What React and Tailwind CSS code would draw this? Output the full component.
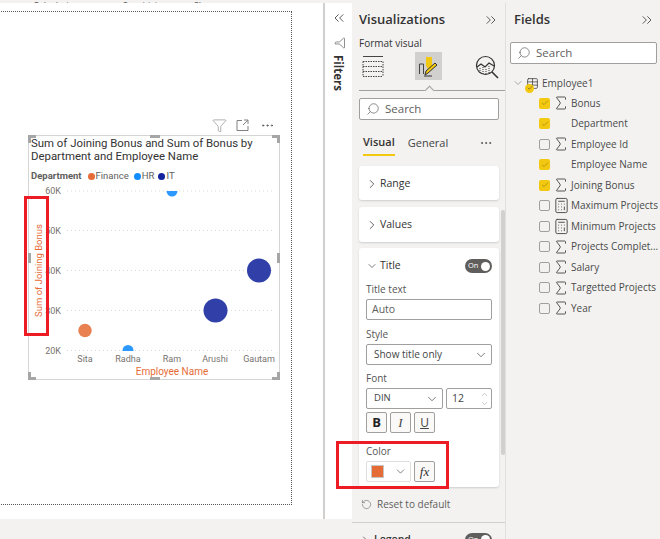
import {
  ChevronDown,
  ChevronRight,
  ChevronUp,
  ChevronsLeft,
  ChevronsRight,
  Calculator,
  Check,
  Ellipsis,
  Funnel,
  RotateCcw,
  Search,
  Sigma,
  Table,
} from "lucide-react";

const ui = "font-['Open_Sans','Noto_Sans',sans-serif]";
const din = "font-['Roboto','Liberation_Sans',sans-serif]";

const fields = [
  { name: "Bonus", on: true, icon: "sum" },
  { name: "Department", on: true },
  { name: "Employee Id", icon: "sum" },
  { name: "Employee Name", on: true },
  { name: "Joining Bonus", on: true, icon: "sum" },
  { name: "Maximum Projects", icon: "calc" },
  { name: "Minimum Projects", icon: "calc" },
  { name: "Projects Complet...", icon: "sum" },
  { name: "Salary", icon: "sum" },
  { name: "Targetted Projects", icon: "sum" },
  { name: "Year", icon: "sum" },
];

const yTicks = [
  { label: "60K", y: 55.5 },
  { label: "50K", y: 95 },
  { label: "40K", y: 135 },
  { label: "30K", y: 175 },
  { label: "20K", y: 215 },
];

const names = [
  { label: "Sita", x: 56 },
  { label: "Radha", x: 99 },
  { label: "Ram", x: 143 },
  { label: "Arushi", x: 186 },
  { label: "Gautam", x: 230 },
];

function Handles() {
  const corner = "absolute w-[8px] h-[8px] border-[#a6a6a6]";
  const side = "absolute bg-[#a6a6a6]";
  return (
    <>
      <div className={`${corner} -left-[1px] -top-[1px] border-l-[3px] border-t-[3px]`} />
      <div className={`${corner} -right-[1px] -top-[1px] border-r-[3px] border-t-[3px]`} />
      <div className={`${corner} -left-[1px] -bottom-[1px] border-l-[3px] border-b-[3px]`} />
      <div className={`${corner} -right-[1px] -bottom-[1px] border-r-[3px] border-b-[3px]`} />
      <div className={`${side} left-[121px] -top-[1px] w-[10px] h-[3px]`} />
      <div className={`${side} left-[121px] -bottom-[1px] w-[10px] h-[3px]`} />
      <div className={`${side} -left-[1px] top-[117px] w-[3px] h-[10px]`} />
      <div className={`${side} -right-[1px] top-[117px] w-[3px] h-[10px]`} />
    </>
  );
}

function Chart() {
  return (
    <div className="absolute left-[28px] top-[132px] w-[252px] h-[245px] border border-[#d5d5d5] bg-white">
      <Handles />
      <div className="absolute right-[4px] -top-[18px] flex items-center text-[#808080]">
        <Funnel size={15} strokeWidth={1} className="mr-[9px]" />
        <svg width="13" height="13" viewBox="0 0 13 13" fill="none" stroke="currentColor" className="mr-[11px]">
          <path d="M6 1.5H1v10h11V7M8 1h4v4M12 1L7 6" />
        </svg>
        <Ellipsis size={15} strokeWidth={1.5} className="text-[#555555]" />
      </div>
      <div className={`${din} pl-[2px] pt-[1px] text-[11.4px] leading-[13px] text-[#333333]`}>
        <div>Sum of Joining Bonus and Sum of Bonus by</div>
        <div>Department and Employee Name</div>
      </div>
      <div className={`${din} flex items-center pl-[2px] mt-[7px] text-[9.5px] leading-[12px] text-[#605e5c]`}>
        <span className="font-bold mr-[6px]">Department</span>
        <span className="w-[7px] h-[7px] rounded-full bg-[#e66c37] mr-[1px]" />
        <span className="mr-[5px]">Finance</span>
        <span className="w-[7px] h-[7px] rounded-full bg-[#118dff] mr-[1px]" />
        <span className="mr-[4px]">HR</span>
        <span className="w-[7px] h-[7px] rounded-full bg-[#12239e] mr-[1px]" />
        <span>IT</span>
      </div>
      <svg width="250" height="199" viewBox="0 44.5 250 199" className="mt-[-2px] block">
        <defs>
          <clipPath id="plot">
            <rect x="30" y="55.5" width="220" height="160" />
          </clipPath>
        </defs>
        {yTicks.map((t) => (
          <g key={t.label}>
            <line x1="38" x2="245" y1={t.y} y2={t.y} stroke="#d9d9d9" strokeDasharray="1 3" />
            <text x="32" y={t.y + 3} textAnchor="end" fontSize="9" fontFamily="Roboto" fill="#77736f">
              {t.label}
            </text>
          </g>
        ))}
        {names.map((n) => (
          <text key={n.label} x={n.x} y="226" textAnchor="middle" fontSize="9" fontFamily="Roboto" fill="#77736f">
            {n.label}
          </text>
        ))}
        <g clipPath="url(#plot)">
          <circle cx="56" cy="195" r="6.7" fill="#e8804f" />
          <circle cx="99" cy="215" r="5.5" fill="#2b99ff" />
          <circle cx="143" cy="55.5" r="5.5" fill="#2b99ff" />
          <circle cx="186.5" cy="175" r="12" fill="#3140a8" />
          <circle cx="230" cy="135" r="12" fill="#3140a8" />
        </g>
        <text x="143" y="239" textAnchor="middle" fontSize="10" fontFamily="Roboto" fill="#e66c37">
          Employee Name
        </text>
        <text
          transform="translate(12.5 135) rotate(-90)"
          textAnchor="middle"
          fontSize="9.5"
          fontFamily="Roboto"
          fill="#e66c37"
        >
          Sum of Joining Bonus
        </text>
      </svg>
    </div>
  );
}

function FormatIcons() {
  return (
    <div className="relative h-[37px] flex items-start mt-[2px]">
      <svg width="22" height="23" viewBox="0 0 22 23" className="ml-[3px] mt-[3px]" fill="none" stroke="#444444">
        <path d="M1 1.5h20" />
        <path d="M1 6.5h20M1 11.5h20M1 16.5h20M1 21.5h20M1 6.5v15M21 6.5v15" strokeDasharray="1.5 1" />
      </svg>
      <div className="ml-[31px] w-[27px] h-[28px] bg-[#d2d0ce] flex items-center justify-center">
        <svg width="22" height="22" viewBox="0 0 22 22" fill="none">
          <path d="M1.5 19V9h4v10" stroke="#444444" />
          <path d="M8 2h6v9l-3 4-3-4z" fill="#f2c811" />
          <path d="M7 20l1-4L17 8l2 2-9 8z" fill="#f2c811" stroke="#333333" />
          <path d="M6 21h8" stroke="#333333" />
        </svg>
      </div>
      <svg width="24" height="24" viewBox="0 0 24 24" className="ml-[33px] mt-[3px]" fill="none" stroke="#333333">
        <circle cx="10.5" cy="10.5" r="9" strokeWidth="1.2" />
        <path d="M2 12l4-3 4 3 4-4 5 3" strokeWidth="1.2" />
        <path d="M5 13v5M8 12v7M11 14v5M14 11v7" strokeDasharray="1 1" />
        <path d="M17 17l6 6" strokeWidth="1.6" />
      </svg>
      <div className="absolute left-0 right-0 top-[38px] h-px bg-[#a19f9d]" />
      <div className="absolute left-[67px] top-[35px] w-[7px] h-[7px] rotate-45 bg-[#f3f2f1] border-l border-t border-[#a19f9d]" />
    </div>
  );
}

function CollapsedCard({ label, className }) {
  return (
    <div className={`flex items-center w-[140px] bg-white rounded-[3px] shadow-[0_1px_2px_rgba(0,0,0,0.15)] pl-[6px] pt-[1px] ${className}`}>
      <ChevronRight size={14} strokeWidth={1.3} className="text-[#333333] mr-[1px]" />
      <span className="text-[10.5px] font-medium text-[#333333]">{label}</span>
    </div>
  );
}

function Select({ label, className }) {
  return (
    <div className={`flex items-center justify-between h-[21px] border border-[#a19f9d] rounded-[2px] bg-white pl-[7px] pr-[3px] text-[#444444] ${className}`}>
      <span>{label}</span>
      <ChevronDown size={14} strokeWidth={1.2} />
    </div>
  );
}

function TitleCard() {
  const label = "text-[10px] leading-[13px] text-[#555555]";
  const toggleBtn = "flex items-center justify-center w-[21px] h-[21px] border border-[#a19f9d] rounded-[2px] bg-[#faf9f8]";
  return (
    <div className="w-[140px] h-[239px] mt-[6px] bg-white rounded-[3px] shadow-[0_1px_2px_rgba(0,0,0,0.15)] px-[7px] pt-[11px]">
      <div className="flex items-center justify-between h-[14px]">
        <div className="flex items-center">
          <ChevronDown size={12} strokeWidth={1.3} className="text-[#333333] mr-[2px]" />
          <span className="text-[10.5px] font-medium text-[#333333]">Title</span>
        </div>
        <div className="flex items-center justify-between w-[27px] h-[14px] rounded-full bg-[#605e5c] pl-[3px] pr-[2px]">
          <span className="text-[7.5px] text-white">On</span>
          <span className="w-[9px] h-[9px] rounded-full bg-white" />
        </div>
      </div>
      <div className={`${label} mt-[10px]`}>Title text</div>
      <div className="flex items-center h-[21px] mt-[3px] border border-[#a19f9d] rounded-[2px] pl-[5px] text-[10.5px] text-[#605e5c]">Auto</div>
      <div className={`${label} mt-[8px]`}>Style</div>
      <Select label="Show title only" className="mt-[3px] text-[10px]" />
      <div className={`${label} mt-[7px]`}>Font</div>
      <div className="flex gap-[3px] mt-[3px]">
        <Select label="DIN" className="w-[77px] text-[9.5px]" />
        <div className="flex items-center justify-between flex-1 h-[21px] border border-[#a19f9d] rounded-[2px] pl-[5px] pr-[2px] text-[10.5px] text-[#444444]">
          <span>12</span>
          <div className="flex flex-col text-[#8a8886]">
            <ChevronUp size={9} strokeWidth={1.2} />
            <ChevronDown size={9} strokeWidth={1.2} />
          </div>
        </div>
      </div>
      <div className="flex gap-[3px] mt-[3px]">
        <div className={`${toggleBtn} text-[13px] font-bold text-[#222222]`}>B</div>
        <div className={`${toggleBtn} text-[13px] italic text-[#444444] font-['Liberation_Serif',serif]`}>I</div>
        <div className={`${toggleBtn} text-[12px] underline text-[#444444]`}>U</div>
      </div>
      <div className={`${label} mt-[12px]`}>Color</div>
      <div className="flex gap-[3px] mt-[3px]">
        <div className="flex items-center justify-between w-[45px] h-[21px] border border-[#e1dfdd] rounded-[2px] pl-[4px] pr-[3px]">
          <span className="w-[13px] h-[13px] bg-[#e66c37] border border-[#c8c6c4]" />
          <ChevronDown size={13} strokeWidth={1.2} className="text-[#444444]" />
        </div>
        <div className={`${toggleBtn} text-[13px] italic text-[#333333] font-['Liberation_Serif',serif]`}>fx</div>
      </div>
    </div>
  );
}

function VisualizationsPane() {
  return (
    <div className="relative w-[154px] h-full shrink-0 bg-[#f3f2f1] pl-[7px] border-r border-[#e1dfdd]">
      <div className="flex items-center justify-between h-[34px] pr-[6px]">
        <span className="text-[13px] font-semibold text-[#333333]">Visualizations</span>
        <ChevronsRight size={16} strokeWidth={1.2} className="text-[#333333]" />
      </div>
      <div className="text-[10px] leading-[14px] -mt-[1px] text-[#333333]">Format visual</div>
      <FormatIcons />
      <div className="flex items-center w-[140px] h-[22px] mt-[9px] border border-[#a19f9d] rounded-[2px] bg-white px-[6px] text-[#605e5c]">
        <Search size={14} strokeWidth={1.2} className="-scale-x-100 mr-[5px]" />
        <span className="text-[11.5px]">Search</span>
      </div>
      <div className="relative flex items-center h-[30px] mt-[8px] w-[140px] text-[11px] text-[#444444]">
        <span className="ml-[4px] font-semibold text-[#333333] border-b-2 border-[#f2c811] h-[22px] mt-[3px]">Visual</span>
        <span className="ml-[13px]">General</span>
        <Ellipsis size={14} strokeWidth={1.3} className="ml-auto mr-[6px]" />
      </div>
      <CollapsedCard label="Range" className="mt-[8px] h-[34px]" />
      <CollapsedCard label="Values" className="mt-[7px] h-[35px]" />
      <TitleCard />
      <div className="flex items-center h-[17px] mt-[9px] pl-[2px] text-[10px] text-[#605e5c]">
        <RotateCcw size={11} strokeWidth={1.2} className="mr-[5px]" />
        Reset to default
      </div>
      <div className="absolute left-0 right-0 top-[519px] h-px bg-[#d2d0ce]" />
      <div className="absolute left-[7px] top-[529px] flex items-center w-[133px] justify-between">
        <div className="flex items-center text-[10.5px] font-semibold text-[#333333]">
          <ChevronRight size={12} strokeWidth={1.3} className="mr-[3px]" />
          Legend
        </div>
        <div className="flex items-center justify-between w-[27px] h-[14px] rounded-full bg-[#605e5c] pl-[3px] pr-[2px]">
          <span className="text-[7.5px] text-white">On</span>
          <span className="w-[9px] h-[9px] rounded-full bg-white" />
        </div>
      </div>
      <div className="absolute right-0 top-[207px] w-[4px] h-[245px] bg-[#d2d0ce] rounded-full" />
    </div>
  );
}

function FieldRow({ field }) {
  return (
    <div className="flex items-center h-[20.5px]">
      {field.on ? (
        <span className="flex items-center justify-center w-[11px] h-[11px] rounded-[2px] bg-[#f2c811] text-[#7a6a10]">
          <Check size={8} strokeWidth={1.5} />
        </span>
      ) : (
        <span className="w-[11px] h-[11px] rounded-[2px] border border-[#a19f9d] bg-[#f3f2f1]" />
      )}
      <span className="flex items-center justify-center w-[12px] ml-[5px] mr-[4px] text-[#444444]">
        {field.icon === "sum" && <Sigma size={18} strokeWidth={1.2} className="shrink-0" />}
        {field.icon === "calc" && <Calculator size={17} strokeWidth={1.3} className="shrink-0" />}
      </span>
      <span className="text-[10px] whitespace-nowrap text-[#4a4a4a]">{field.name}</span>
    </div>
  );
}

function FieldsPane() {
  return (
    <div className="w-[154px] h-full shrink-0 bg-[#f3f2f1] pl-[4px]">
      <div className="flex items-center justify-between h-[34px] pl-[4px] pr-[5px]">
        <span className="text-[13px] font-semibold text-[#333333]">Fields</span>
        <ChevronsRight size={16} strokeWidth={1.2} className="text-[#333333]" />
      </div>
      <div className="flex items-center w-[147px] h-[22px] mt-[5px] border border-[#a19f9d] rounded-[2px] bg-white px-[6px] text-[#605e5c]">
        <Search size={14} strokeWidth={1.2} className="-scale-x-100 mr-[5px]" />
        <span className="text-[11.5px]">Search</span>
      </div>
      <div className="flex items-center h-[20px] mt-[9px] ml-[2px] text-[#605e5c]">
        <ChevronDown size={12} strokeWidth={1} className="mr-[2px]" />
        <span className="relative mr-[3px]">
          <Table size={13} strokeWidth={1.3} className="text-[#333333]" />
          <span className="absolute -left-[1px] top-[7px] flex items-center justify-center w-[9px] h-[9px] rounded-full bg-[#f2c811] text-[#333333]">
            <Check size={6} strokeWidth={2} />
          </span>
        </span>
        <span className="text-[10px] text-[#4a4a4a]">Employee1</span>
      </div>
      <div className="ml-[29px]">
        {fields.map((field) => (
          <FieldRow key={field.name} field={field} />
        ))}
      </div>
    </div>
  );
}

export default function App() {
  return (
    <div className={`${ui} relative w-[660px] h-[539px] overflow-hidden bg-white flex flex-col`}>
      <div className="flex items-end h-[3px] overflow-hidden bg-[#f3f2f1] text-[9px] leading-[10px] text-[#555555]">
        <span className="ml-[33px] -mb-[8px]">Calculations</span>
        <span className="ml-[39px] -mb-[8px]">Sensitivity</span>
        <span className="ml-[29px] -mb-[8px]">Share</span>
      </div>
      <div className="flex flex-1 min-h-0">
        <div className="w-[352px] h-full shrink-0 flex flex-col">
          <div className="flex h-[516px]">
            <div className="relative w-[323px] shrink-0">
              <div className="w-[294px] h-[494px] -ml-[2px] mt-[8px] border border-dotted border-[#555555]" />
              <div className="absolute left-0 top-0">
                <Chart />
              </div>
            </div>
            <div className="flex-1 border-l-2 border-[#d2d0ce] flex flex-col items-center pt-[7px] text-[#333333]">
              <ChevronsLeft size={16} strokeWidth={1.2} />
              <Funnel size={12} strokeWidth={1.1} className="mt-[11px] ml-[3px] rotate-90" />
              <span className="mt-[6px] text-[11.5px] font-bold [writing-mode:vertical-rl]">Filters</span>
            </div>
          </div>
          <div className="flex-1 bg-[#f3f2f1]" />
        </div>
        <VisualizationsPane />
        <FieldsPane />
      </div>
      <div className="absolute left-[24px] top-[196px] w-[25px] h-[140px] border-[3px] border-[#ed1c24]" />
      <div className="absolute left-[336px] top-[441px] w-[113px] h-[48px] border-[3px] border-[#ed1c24]" />
    </div>
  );
}
